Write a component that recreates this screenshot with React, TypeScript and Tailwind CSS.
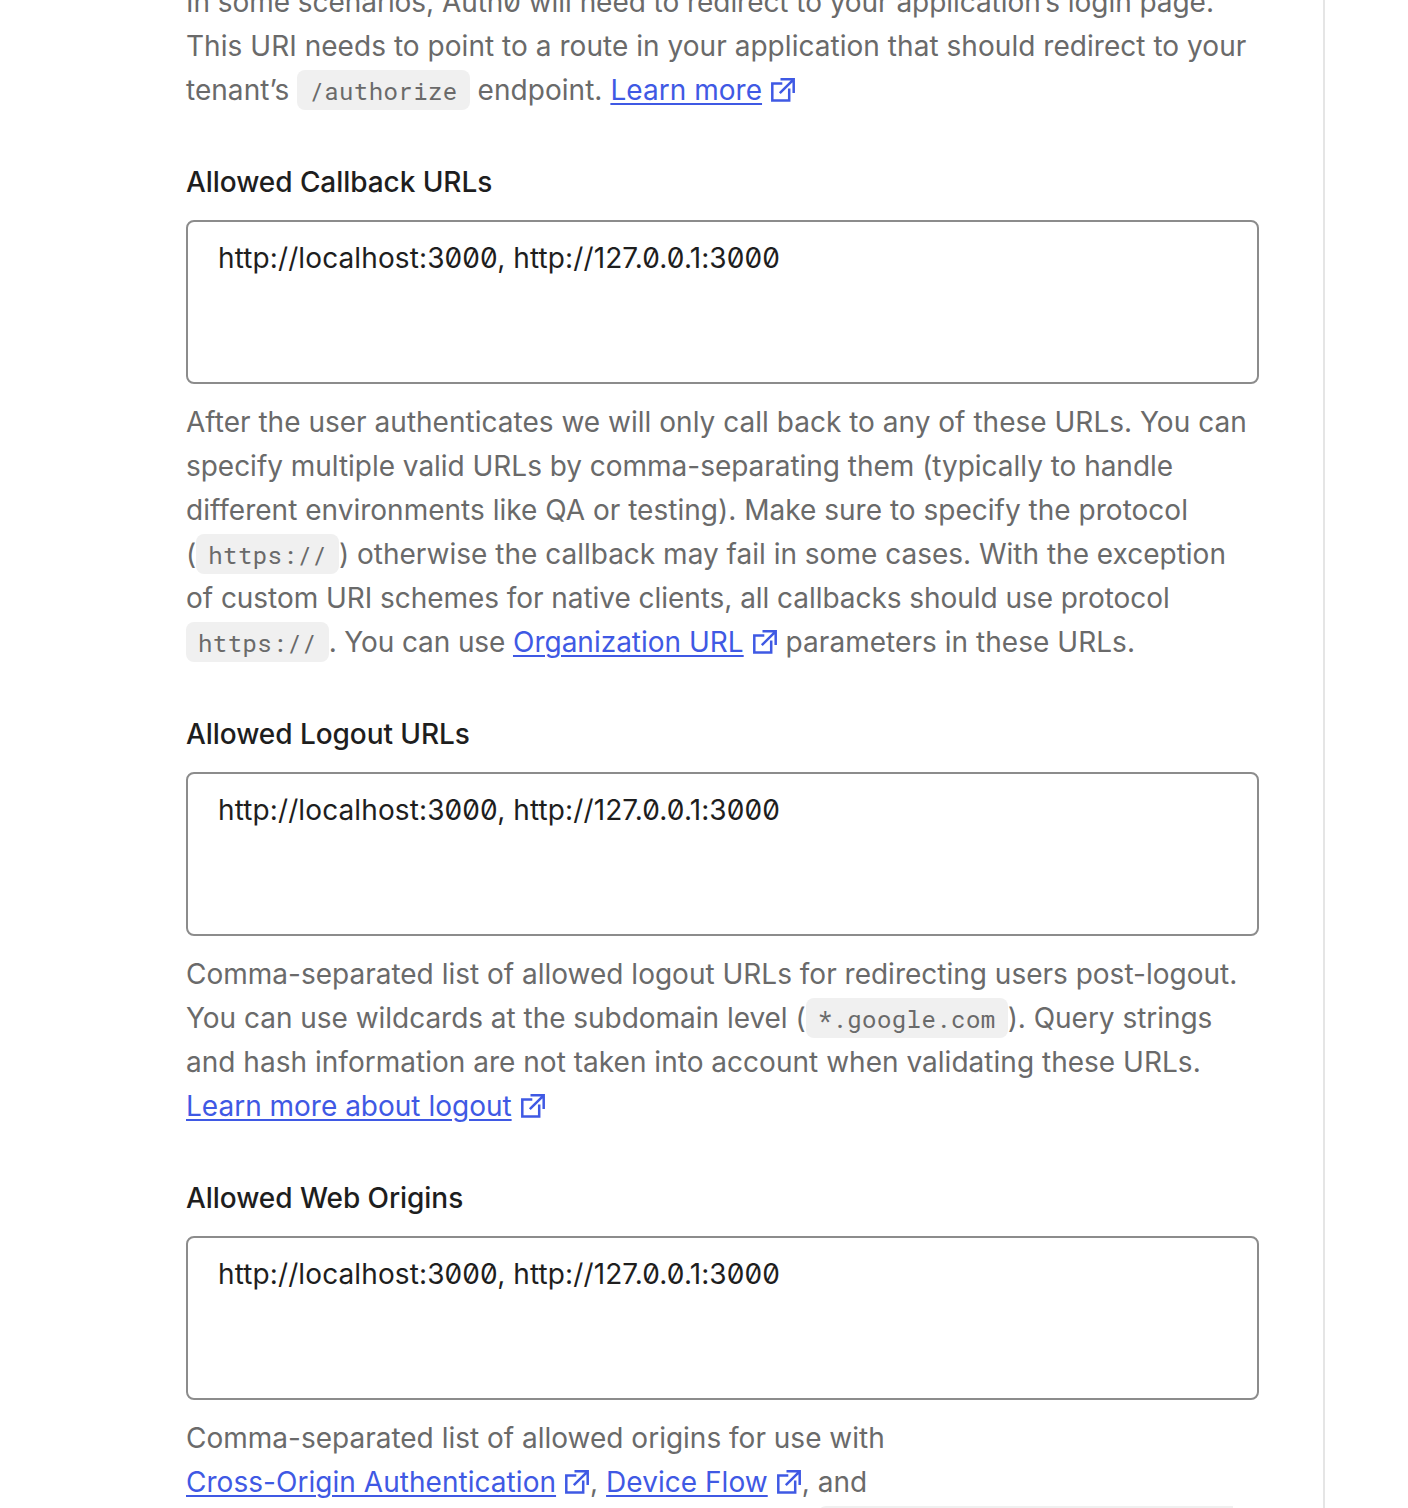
import React from "react";

const Ext = () => (
  <svg className="ml-[9px] mr-px inline-block h-6 w-6 align-[-2px]" viewBox="0 0 24 24" fill="none" stroke="currentColor" strokeWidth="2.5">
    <path d="M11.3 5.6H1.3V22.6H18.2V10.5" />
    <path d="M9.5 1.3H22.7V15M22.2 1.8L8.8 15.2" />
  </svg>
);

const Link = ({ children }: { children: React.ReactNode }) => (
  <a className="whitespace-nowrap text-[#3f59e4]">
    <span className="underline decoration-2 underline-offset-[3px]">{children}</span>
    <Ext />
  </a>
);

const Code = ({ children }: { children: React.ReactNode }) => (
  <code className="inline-block h-10 rounded-lg bg-[#f0f0f0] px-3 align-baseline font-['Roboto_Mono','DejaVu_Sans_Mono',monospace] text-[24px] leading-[42px] tracking-[0.43px]">{children}</code>
);

const Help = ({ children }: { children: React.ReactNode }) => (
  <div className="whitespace-nowrap text-[28px] leading-[44px] text-[#6a6a6a]">{children}</div>
);

const Line = ({ children, className = "" }: { children: React.ReactNode; className?: string }) => (
  <div className={"h-11 " + className}>{children}</div>
);

const Field = ({ label, children }: { label: string; children: React.ReactNode }) => (
  <section className="mt-12">
    <h2 className="mb-4 text-[28px] font-medium leading-[44px] tracking-[-0.06px] text-[#1e1e1e]">{label}</h2>
    <div className="mb-4 h-[164px] rounded-lg border-2 border-[#8c8c8c] px-[30px] py-[14px] text-[28px] leading-[44px] tracking-[0.11px] text-[#1e1e1e]">
      http://localhost:3000, http://127.0.0.1:3000
    </div>
    <Help>{children}</Help>
  </section>
);

export default function App() {
  return (
    <div className="h-[1508px] w-[1408px] overflow-hidden bg-white font-[Inter,sans-serif] [font-feature-settings:'zero']">
      <div className="flow-root h-full w-[1325px] border-r-2 border-[#e5e5e5] pl-[186px] pr-16">
        <div className="-mt-5">
          <Help>
            <Line className="tracking-[-0.05px]">In some scenarios, Auth0 will need to redirect to your application’s login page.</Line>
            <Line className="tracking-[0.04px]">This URI needs to point to a route in your application that should redirect to your</Line>
            <Line className="tracking-[0.04px]">tenant’s <Code>/authorize</Code> endpoint. <Link>Learn more</Link></Line>
          </Help>
          <Field label="Allowed Callback URLs">
            <Line className="tracking-[0.015px]">After the user authenticates we will only call back to any of these URLs. You can</Line>
            <Line className="tracking-[-0.03px]">specify multiple valid URLs by comma-separating them (typically to handle</Line>
            <Line className="tracking-[0.015px]">different environments like QA or testing). Make sure to specify the protocol</Line>
            <Line>(<Code>https://</Code>) otherwise the callback may fail in some cases. With the exception</Line>
            <Line className="tracking-[-0.05px]">of custom URI schemes for native clients, all callbacks should use protocol</Line>
            <Line><Code>https://</Code><span className="tracking-[-0.12px]">. You can use </span><Link>Organization URL</Link><span className="tracking-[0.04px]"> parameters in these URLs.</span></Line>
          </Field>
          <Field label="Allowed Logout URLs">
            <Line>Comma-separated list of allowed logout URLs for redirecting users post-logout.</Line>
            <Line className="tracking-[-0.03px]">You can use wildcards at the subdomain level (<Code>*.google.com</Code>). Query strings</Line>
            <Line className="tracking-[0.02px]">and hash information are not taken into account when validating these URLs.</Line>
            <Line><Link>Learn more about logout</Link></Line>
          </Field>
          <Field label="Allowed Web Origins">
            <Line>Comma-separated list of allowed origins for use with</Line>
            <Line className="tracking-[0.04px]"><Link>Cross-Origin Authentication</Link>, <Link>Device Flow</Link>, and</Line>
            <div className="ml-[632px] mt-[2px] h-10 w-[415px] rounded-l-lg bg-[#f0f0f0]" />
          </Field>
        </div>
      </div>
    </div>
  );
}
